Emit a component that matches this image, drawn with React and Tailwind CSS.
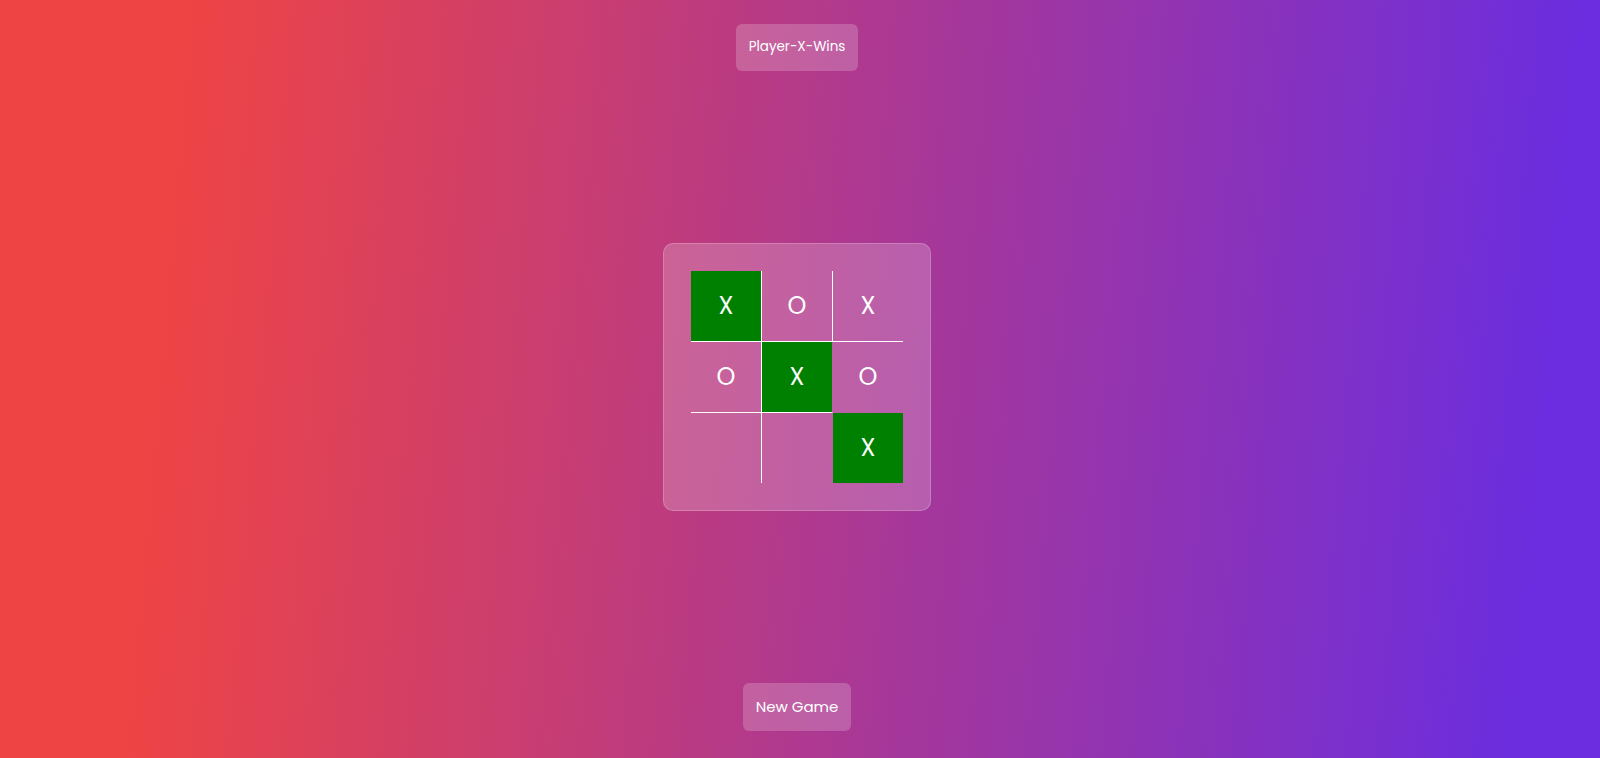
import React from 'react';

const cells = [
  { v: 'X', win: true, cls: 'border-r border-b border-white' },
  { v: 'O', win: false, cls: 'border-r border-b border-white' },
  { v: 'X', win: false, cls: 'border-b border-white' },
  { v: 'O', win: false, cls: 'border-r border-b border-white' },
  { v: 'X', win: true, cls: 'border-r border-b border-r-transparent border-b-white' },
  { v: 'O', win: false, cls: 'border-b border-transparent' },
  { v: '', win: false, cls: 'border-r border-white' },
  { v: '', win: false, cls: 'border-r border-transparent' },
  { v: 'X', win: true, cls: '' },
];

const Board = () => {
  return (
    <div className="rounded-[10px] border border-white/20 bg-white/20 p-[27px]">
      <div className="grid grid-cols-[71px_71px_70px] grid-rows-[71px_71px_70px]">
        {cells.map((c, i) => (
          <div
            key={i}
            className={`flex items-center justify-center bg-clip-padding text-[24px] text-white ${c.cls} ${
              c.win ? 'bg-[#008000]' : ''
            }`}
          >
            {c.v}
          </div>
        ))}
      </div>
    </div>
  );
};

export default function App() {
  return (
    <div className="flex h-screen w-full flex-col items-center justify-between bg-[linear-gradient(95deg,#ef4444_11%,#6b2ddf_95%)] pt-6 pb-[27px] pr-1.5 font-['Poppins','Open_Sans',sans-serif]">
      <div className="flex h-[47px] items-center rounded-md bg-white/20 px-[12.5px] text-[13.5px] text-white">
        Player-X-Wins
      </div>

      <Board />

      <button className="flex h-[48px] items-center rounded-md bg-white/20 px-[12.5px] text-[15px] text-white">
        New Game
      </button>
    </div>
  );
}
